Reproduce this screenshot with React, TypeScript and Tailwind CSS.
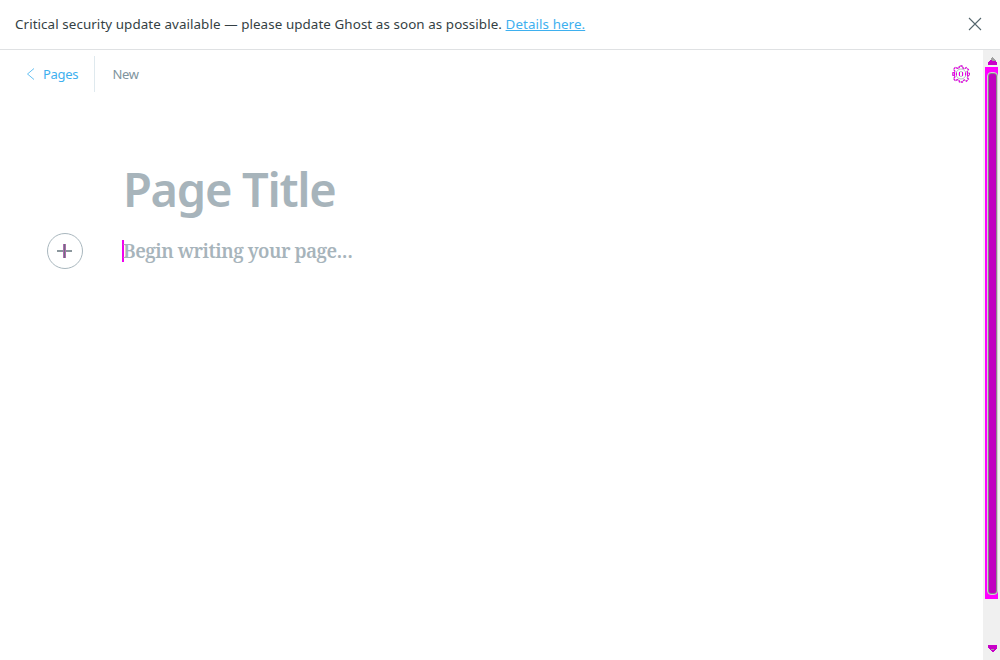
import React from "react";

const GEAR =
  "M7 3.200L7.500 1h3l.5 2.200 1.500.6L14.400 2.600l2 2-1.200 1.900.6 1.500 1.700.4v2l-1.700.4-.6 1.500 1.200 1.900-2 2-1.900-1.200-1.500.6L10.500 17h-3L7 15.200l-1.500-.6-1.900 1.200-2-2 1.200-1.900-.6-1.500L.5 10V8l1.700-.4.6-1.500-1.200-1.900 2-2 1.900 1.200z";

function Notice() {
  return (
    <header className="flex h-[50px] shrink-0 items-center justify-between border-b border-[#dfe1e3] pl-[15px] pr-[18px]">
      <p className="-mt-px whitespace-nowrap text-[13.4px] leading-5 tracking-[0.075px] text-[#343f44]">
        Critical security update available — please update Ghost as soon as possible.{" "}
        <a href="#" className="text-[#3eb0ef] underline">Details here.</a>
      </p>
      <button aria-label="Close" className="-mt-px text-[#54666d]">
        <svg width="14" height="14" viewBox="0 0 14 14" fill="none" stroke="currentColor" strokeWidth="1.1">
          <path d="M1 1l12 12M13 1L1 13" />
        </svg>
      </button>
    </header>
  );
}

function Toolbar() {
  return (
    <nav className="flex h-[48px] items-center pl-[26px] pr-[13px] text-[13px]">
      <a href="#" className="flex h-[36px] w-[69px] items-center border-r border-[#dfe9ee] text-[#3eb0ef]">
        <svg width="9" height="12" viewBox="0 0 9 12" fill="none" stroke="currentColor" strokeWidth="0.8">
          <path d="M8 .5L1.5 6L8 11.5" />
        </svg>
        <span className="ml-2 pt-[2px] tracking-[-0.3px]">Pages</span>
      </a>
      <span className="ml-[17.5px] pt-[2px] tracking-[-0.3px] text-[#80949d]">New</span>
      <button aria-label="Settings" className="ml-auto text-[#e800e8]">
        <svg width="18" height="18" viewBox="0 0 18 18" fill="none">
          <path stroke="#b4b4b8" d={GEAR} />
          <path stroke="currentColor" strokeWidth="1.3" strokeDasharray="2 1.2" d={GEAR} />
          <circle cx="9" cy="9" r="5" stroke="#b5bdc1" />
          <ellipse cx="9" cy="9" rx="2" ry="2.5" stroke="#b5bdc1" />
          <path stroke="currentColor" d="M2.500 7v4M4.500 7.500v3M7.500 7v4M10.500 7v4M13.500 7.500v3M15.500 7v4" />
        </svg>
      </button>
    </nav>
  );
}

function Scrollbar() {
  return (
    <div className="flex w-[17px] shrink-0 flex-col items-start bg-[#f0f0f0]">
      <svg className="shrink-0" width="17" height="17" viewBox="0 0 17 17" shapeRendering="crispEdges">
        <path d="M5 15v-3l4-4 5 4v3z" fill="#c800c8" />
        <path d="M7 9l2-2 2 2 2 2H9z" fill="#a0a0a0" />
      </svg>
      <div className="ml-[2px] flex h-[532px] w-[13px] justify-center bg-[#ff00ff] pb-[4px] pl-[2px] pt-[5px]">
        <div className="w-[11px] rounded-[4px] border border-[#d8c8d8] bg-[#858585] p-px">
          <div className="h-full rounded-[2px] bg-[#c000c0]" />
        </div>
      </div>
      <svg className="mb-[3px] mt-auto" width="17" height="14" viewBox="0 0 17 14" shapeRendering="crispEdges">
        <path d="M5 2h9v3l-4 4H9L5 5z" fill="#c800c8" />
        <path d="M8 6h3v1H8z" fill="#a0a0a0" />
      </svg>
    </div>
  );
}

export default function App() {
  return (
    <div className="flex h-[660px] w-[1000px] flex-col overflow-hidden bg-white font-['Noto_Sans',sans-serif]">
      <Notice />
      <div className="flex min-h-0 flex-1">
        <main className="flex-1">
          <Toolbar />
          <h1 className="ml-[123px] mt-[61px] h-[60px] whitespace-nowrap text-[47px] font-semibold leading-[60px] tracking-[-1.3px] text-[#a7b4bb]">Page Title</h1>
          <div className="mt-[14px] flex h-[36px] items-center pl-[47px]">
            <button aria-label="Add content" className="flex size-9 items-center justify-center rounded-full border border-[#a9b7be]">
              <svg width="16" height="16" viewBox="0 0 16 16" shapeRendering="crispEdges">
                <path d="M0 7h15v2H0z" fill="#8b979d" />
                <path d="M6 1h3v14H6z" fill="#b06ab0" />
                <path d="M7 1h1v14H7z" fill="#69767c" />
              </svg>
            </button>
            <div className="ml-[39px] h-[22px] w-[2px] bg-[#f000f0]" />
            <p className="-ml-px whitespace-nowrap font-['Noto_Serif','Liberation_Serif',serif] text-[19px] font-semibold tracking-[-0.5px] text-[#a7b4bb]">
              Begin writing your page<span className="tracking-[0.1px]">...</span>
            </p>
          </div>
        </main>
        <Scrollbar />
      </div>
    </div>
  );
}
